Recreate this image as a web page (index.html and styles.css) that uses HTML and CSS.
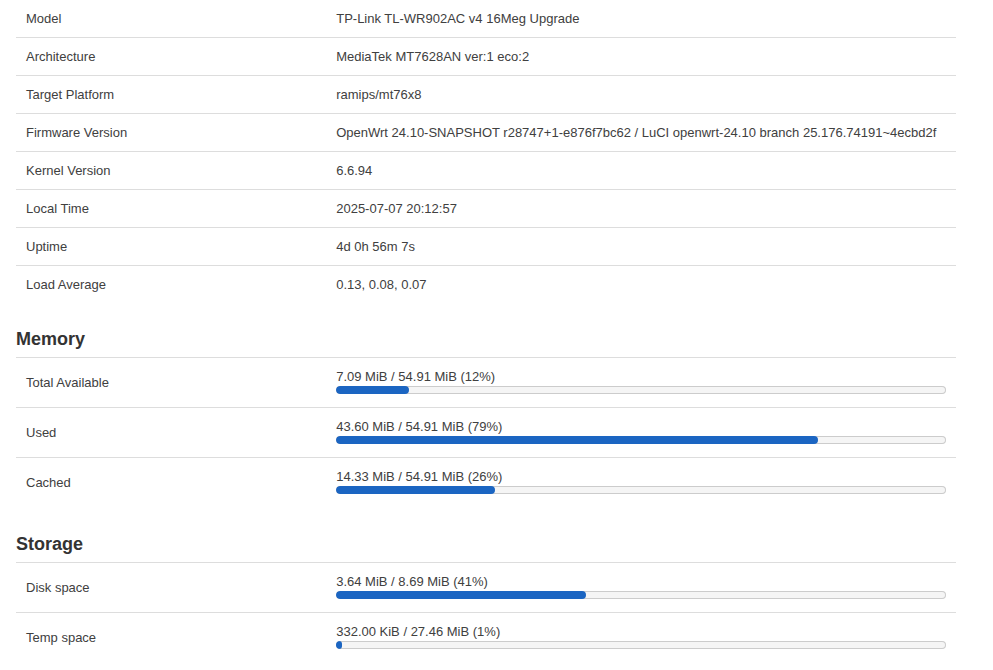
FILE: index.html
```html
<!DOCTYPE html>
<html lang="en">
<head>
    <meta charset="UTF-8">
    <meta name="viewport" content="width=device-width, initial-scale=1.0">
    <title>Status - Overview</title>
    <link rel="stylesheet" href="styles.css">
</head>
<body>
    <div class="section">
        <table class="table">
            <tr class="tr first"><td class="td left">Model</td><td class="td">TP-Link TL-WR902AC v4 16Meg Upgrade</td></tr>
            <tr class="tr"><td class="td left">Architecture</td><td class="td">MediaTek MT7628AN ver:1 eco:2</td></tr>
            <tr class="tr"><td class="td left">Target Platform</td><td class="td">ramips/mt76x8</td></tr>
            <tr class="tr"><td class="td left">Firmware Version</td><td class="td">OpenWrt 24.10-SNAPSHOT r28747+1-e876f7bc62 / LuCI openwrt-24.10 branch 25.176.74191~4ecbd2f</td></tr>
            <tr class="tr"><td class="td left">Kernel Version</td><td class="td">6.6.94</td></tr>
            <tr class="tr"><td class="td left">Local Time</td><td class="td">2025-07-07 20:12:57</td></tr>
            <tr class="tr"><td class="td left">Uptime</td><td class="td">4d 0h 56m 7s</td></tr>
            <tr class="tr"><td class="td left">Load Average</td><td class="td">0.13, 0.08, 0.07</td></tr>
        </table>
    </div>

    <div class="section">
        <h3>Memory</h3>
        <table class="table">
            <tr class="tr">
                <td class="td left">Total Available</td>
                <td class="td">
                    <div class="progress-label">7.09 MiB / 54.91 MiB (12%)</div>
                    <div class="progress"><div style="width: 12%"></div></div>
                </td>
            </tr>
            <tr class="tr">
                <td class="td left">Used</td>
                <td class="td">
                    <div class="progress-label">43.60 MiB / 54.91 MiB (79%)</div>
                    <div class="progress"><div style="width: 79%"></div></div>
                </td>
            </tr>
            <tr class="tr">
                <td class="td left">Cached</td>
                <td class="td">
                    <div class="progress-label">14.33 MiB / 54.91 MiB (26%)</div>
                    <div class="progress"><div style="width: 26%"></div></div>
                </td>
            </tr>
        </table>
    </div>

    <div class="section storage">
        <h3>Storage</h3>
        <table class="table">
            <tr class="tr">
                <td class="td left">Disk space</td>
                <td class="td">
                    <div class="progress-label">3.64 MiB / 8.69 MiB (41%)</div>
                    <div class="progress"><div style="width: 41%"></div></div>
                </td>
            </tr>
            <tr class="tr">
                <td class="td left">Temp space</td>
                <td class="td">
                    <div class="progress-label">332.00 KiB / 27.46 MiB (1%)</div>
                    <div class="progress"><div style="width: 1%"></div></div>
                </td>
            </tr>
        </table>
    </div>
</body>
</html>
```

FILE: styles.css
```css
body {
    font-family: "Liberation Sans", Arial, sans-serif;
    font-size: 13px;
    line-height: 17px;
    color: #404040;
    background-color: #ffffff;
    margin: 0;
    padding: 0 37px 0 16px;
}
.section {
    margin: 0;
}
h3 {
    font-size: 18px;
    line-height: 24px;
    font-weight: bold;
    color: #333333;
    margin: 24px 0 6px 0;
}
.storage h3 {
    margin-top: 25px;
}
.table {
    width: 100%;
    border-collapse: collapse;
    border-spacing: 0;
}
.td {
    padding: 10px;
    border-top: 1px solid #dddddd;
    vertical-align: middle;
    text-align: left;
}
.first .td {
    border-top: none;
}
.td.left {
    width: 33%;
}
.progress-label {
    line-height: 18px;
}
.progress {
    height: 8px;
    margin: 0 0 3px 0;
    background-color: #f5f5f5;
    border-radius: 4px;
    box-shadow: inset 0 0 0 1px #cccccc;
    overflow: hidden;
}
.progress div {
    height: 100%;
    min-width: 6px;
    background-color: #1b65c2;
    border-radius: 4px;
}
```
